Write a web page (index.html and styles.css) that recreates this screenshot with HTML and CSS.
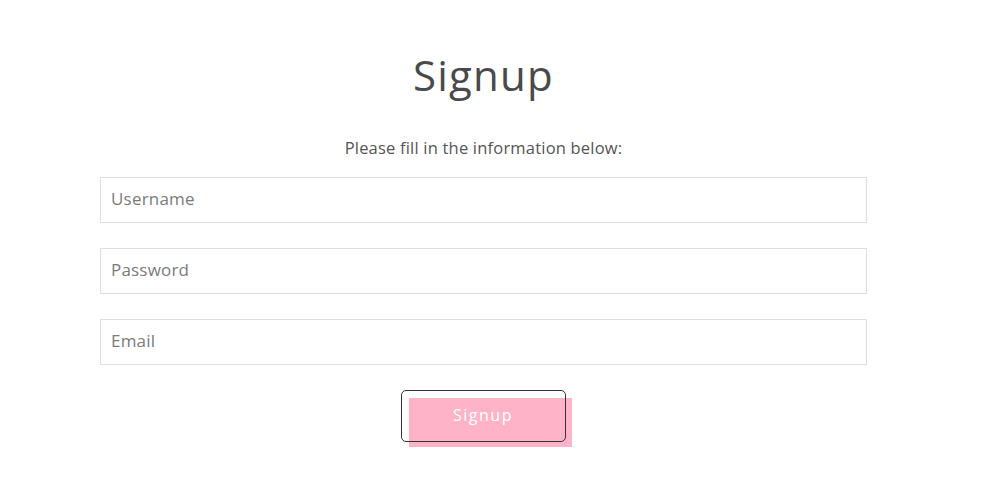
FILE: index.html
```html
<!DOCTYPE html>
<html>
<head>
<meta charset="utf-8">
<link rel="stylesheet" href="styles.css">
</head>
<body>
<main class="signup">
  <h1 class="title">Signup</h1>
  <p class="lead">Please fill in the information below:</p>
  <form class="form">
    <input class="field" type="text" placeholder="Username">
    <input class="field" type="password" placeholder="Password">
    <input class="field" type="email" placeholder="Email">
    <div class="actions">
      <button class="btn" type="button">Signup</button>
    </div>
  </form>
</main>
</body>
</html>
```

FILE: styles.css
```css
html, body {
  margin: 0;
  padding: 0;
  background: #fff;
}
body {
  font-family: "Open Sans", "DejaVu Sans", sans-serif;
  color: #4a4a4a;
}
.signup {
  width: 767px;
  margin-left: 100px;
  padding-top: 51px;
  display: flex;
  flex-direction: column;
  align-items: center;
}
.title {
  margin: 0;
  font-size: 42px;
  font-weight: 400;
  line-height: 48px;
  letter-spacing: 1.2px;
  color: #4a4a4a;
}
.lead {
  margin: 37px 0 0;
  font-size: 16.5px;
  line-height: 24px;
  letter-spacing: 0.2px;
  color: #555;
}
.form {
  width: 100%;
  margin-top: 17px;
  display: flex;
  flex-direction: column;
  gap: 25px;
}
.field {
  box-sizing: border-box;
  width: 100%;
  height: 46px;
  border: 1px solid #dedede;
  padding: 0 10px 3px;
  font-family: inherit;
  font-size: 17px;
  letter-spacing: 0.2px;
  color: #444;
  outline: none;
}
.field::placeholder {
  color: #7a7a7a;
}
.actions {
  display: flex;
  justify-content: center;
  padding-left: 13px;
  padding-top: 8px;
}
.btn {
  position: relative;
  overflow: visible;
  box-sizing: border-box;
  width: 163px;
  height: 49px;
  border: none;
  border-radius: 0;
  background: #ffb3c9;
  color: #fff;
  font-family: inherit;
  font-size: 16px;
  letter-spacing: 1.5px;
  padding: 0 14px 15px 0;
}
.btn::after {
  content: "";
  position: absolute;
  left: -8px;
  top: -8px;
  width: 165px;
  height: 52px;
  box-sizing: border-box;
  border: 1px solid #333;
  border-radius: 5px;
  pointer-events: none;
}
```
